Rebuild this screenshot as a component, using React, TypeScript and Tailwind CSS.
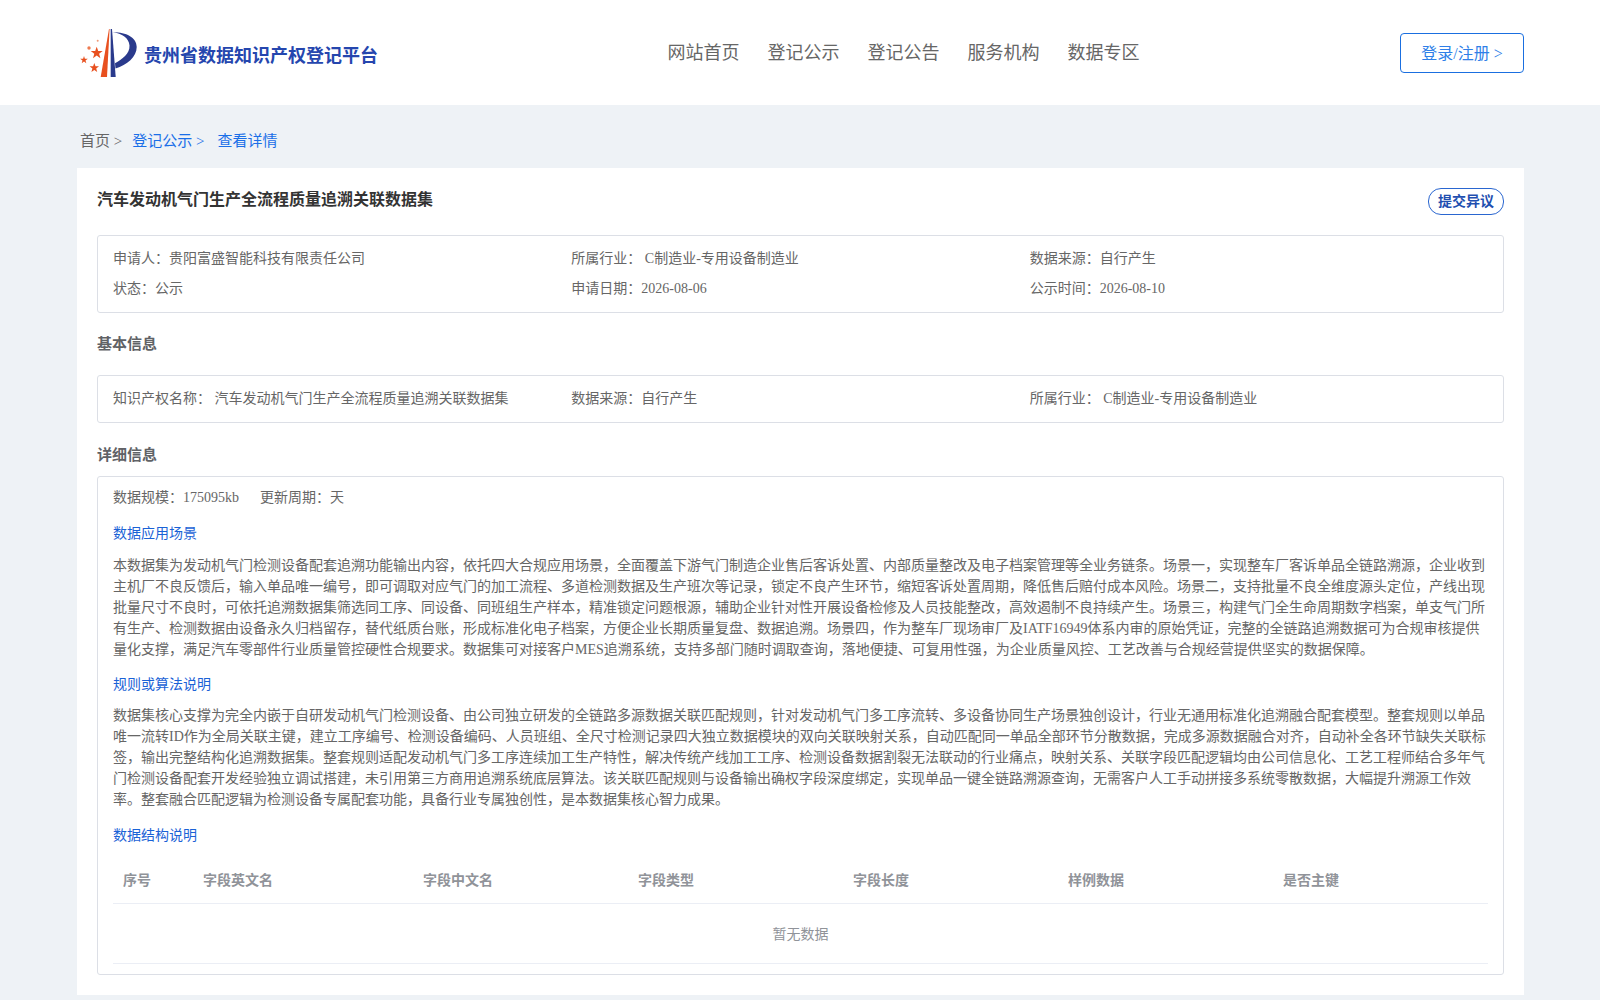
const navItems = ["网站首页", "登记公示", "登记公告", "服务机构", "数据专区"];

const columns = [
  { label: "序号", width: "w-[80px]" },
  { label: "字段英文名", width: "w-[220px]" },
  { label: "字段中文名", width: "w-[215px]" },
  { label: "字段类型", width: "w-[215px]" },
  { label: "字段长度", width: "w-[215px]" },
  { label: "样例数据", width: "w-[215px]" },
  { label: "是否主键", width: "w-[215px]" },
];

function Logo() {
  return (
    <svg viewBox="0 0 60 50" className="h-[50px] w-[60px] shrink-0">
      <path d="M29 1 L20.7 49 L27 49 L29.6 1 Z" fill="#e8501f" />
      <path d="M30.7 1 L30.7 49 L35.7 49 L32 1 Z" fill="#2a3a8c" />
      <path d="M32.7 4.3 C45 4 56.7 9 56.7 19 C56.7 29 47 37 35.5 40.5 L35 35.3 C42 31 50 26 49.5 17.5 C49 10 42 5.5 32.7 4.3 Z" fill="#2a3a8c" />
      <polygon points="16.7,18.7 18.2,23 22.7,23 19.1,25.8 20.4,30.2 16.7,27.6 13,30.2 14.3,25.8 10.7,23 15.2,23" fill="#e8501f" />
      <polygon points="14.3,35 15.5,38.3 19,38.3 16.2,40.5 17.2,44 14.3,42 11.4,44 12.4,40.5 9.6,38.3 13.1,38.3" fill="#e8501f" />
      <polygon points="4,28 4.9,30.7 7.8,30.7 5.5,32.4 6.3,35.2 4,33.6 1.7,35.2 2.5,32.4 0.2,30.7 3.1,30.7" fill="#e8501f" />
      <circle cx="9" cy="20" r="1.7" fill="#ee7a50" />
      <circle cx="17.7" cy="12.7" r="1" fill="#ee9a7a" />
    </svg>
  );
}

function InfoCell({ children }: { children: React.ReactNode }) {
  return <div className="w-1/3 leading-[30px]">{children}</div>;
}

export default function App() {
  return (
    <div className="min-h-[1000px] bg-[#eef2f6] pb-[5px] font-['Liberation_Serif','Noto_Sans_CJK_SC',serif] text-[14px] text-[#666]">
      <header className="flex h-[105px] items-center justify-between bg-white pl-[80px] pr-[76px]">
        <div className="flex items-center gap-[4px]">
          <Logo />
          <span className="mt-[8px] text-[18px] font-bold text-[#2546ae]">贵州省数据知识产权登记平台</span>
        </div>
        <nav className="ml-[29px] mt-[2px] flex gap-[28px] text-[18px] text-[#666]">
          {navItems.map((item) => (
            <a key={item}>{item}</a>
          ))}
        </nav>
        <button className="h-[40px] w-[124px] rounded-[4px] border border-[#1a6fe0] pt-[2px] text-[16px] text-[#2f7fe8]">
          登录/注册 &gt;
        </button>
      </header>

      <div className="flex h-[63px] items-center pl-[80px] pt-[10px] text-[15px]">
        <span>首页 &gt;</span>
        <span className="ml-[10px] text-[#1a6fe8]">登记公示 &gt;</span>
        <span className="ml-[13px] text-[#1a6fe8]">查看详情</span>
      </div>

      <main className="ml-[77px] w-[1447px] bg-white px-[20px] pb-[20px] pt-[20px]">
        <div className="flex items-start justify-between">
          <h1 className="text-[16px] font-bold leading-[24px] text-[#333]">汽车发动机气门生产全流程质量追溯关联数据集</h1>
          <button className="h-[27px] w-[76px] rounded-[13px] border border-[#2a66d0] text-[14px] font-bold text-[#1f4fb0]">
            提交异议
          </button>
        </div>

        <div className="mt-[20px] rounded-[3px] border border-[#dcdfe6] px-[15px] py-[8px]">
          <div className="flex">
            <InfoCell>申请人：贵阳富盛智能科技有限责任公司</InfoCell>
            <InfoCell>所属行业： C制造业-专用设备制造业</InfoCell>
            <InfoCell>数据来源：自行产生</InfoCell>
          </div>
          <div className="flex">
            <InfoCell>状态：公示</InfoCell>
            <InfoCell>申请日期：2026-08-06</InfoCell>
            <InfoCell>公示时间：2026-08-10</InfoCell>
          </div>
        </div>

        <h2 className="mt-[19px] text-[15px] font-bold leading-[24px] text-[#606266]">基本信息</h2>
        <div className="mt-[19px] rounded-[3px] border border-[#dcdfe6] px-[15px] py-[8px]">
          <div className="flex">
            <InfoCell>知识产权名称： 汽车发动机气门生产全流程质量追溯关联数据集</InfoCell>
            <InfoCell>数据来源：自行产生</InfoCell>
            <InfoCell>所属行业： C制造业-专用设备制造业</InfoCell>
          </div>
        </div>

        <h2 className="mt-[20px] text-[15px] font-bold leading-[24px] text-[#606266]">详细信息</h2>
        <div className="mt-[9px] rounded-[3px] border border-[#dcdfe6] px-[15px] pb-[10px]">
          <div className="mt-[9px] flex gap-[21px] leading-[24px]">
            <span>数据规模：175095kb</span>
            <span>更新周期：天</span>
          </div>
          <h3 className="mt-[12px] leading-[24px] text-[#1a62d6]">数据应用场景</h3>
          <p className="mt-[9px] leading-[21px]">
            本数据集为发动机气门检测设备配套追溯功能输出内容，依托四大合规应用场景，全面覆盖下游气门制造企业售后客诉处置、内部质量整改及电子档案管理等全业务链条。场景一，实现整车厂客诉单品全链路溯源，企业收到主机厂不良反馈后，输入单品唯一编号，即可调取对应气门的加工流程、多道检测数据及生产班次等记录，锁定不良产生环节，缩短客诉处置周期，降低售后赔付成本风险。场景二，支持批量不良全维度源头定位，产线出现批量尺寸不良时，可依托追溯数据集筛选同工序、同设备、同班组生产样本，精准锁定问题根源，辅助企业针对性开展设备检修及人员技能整改，高效遏制不良持续产生。场景三，构建气门全生命周期数字档案，单支气门所有生产、检测数据由设备永久归档留存，替代纸质台账，形成标准化电子档案，方便企业长期质量复盘、数据追溯。场景四，作为整车厂现场审厂及IATF16949体系内审的原始凭证，完整的全链路追溯数据可为合规审核提供量化支撑，满足汽车零部件行业质量管控硬性合规要求。数据集可对接客户MES追溯系统，支持多部门随时调取查询，落地便捷、可复用性强，为企业质量风控、工艺改善与合规经营提供坚实的数据保障。
          </p>
          <h3 className="mt-[13px] leading-[24px] text-[#1a62d6]">规则或算法说明</h3>
          <p className="mt-[8px] leading-[21px]">
            数据集核心支撑为完全内嵌于自研发动机气门检测设备、由公司独立研发的全链路多源数据关联匹配规则，针对发动机气门多工序流转、多设备协同生产场景独创设计，行业无通用标准化追溯融合配套模型。整套规则以单品唯一流转ID作为全局关联主键，建立工序编号、检测设备编码、人员班组、全尺寸检测记录四大独立数据模块的双向关联映射关系，自动匹配同一单品全部环节分散数据，完成多源数据融合对齐，自动补全各环节缺失关联标签，输出完整结构化追溯数据集。整套规则适配发动机气门多工序连续加工生产特性，解决传统产线加工工序、检测设备数据割裂无法联动的行业痛点，映射关系、关联字段匹配逻辑均由公司信息化、工艺工程师结合多年气门检测设备配套开发经验独立调试搭建，未引用第三方商用追溯系统底层算法。该关联匹配规则与设备输出确权字段深度绑定，实现单品一键全链路溯源查询，无需客户人工手动拼接多系统零散数据，大幅提升溯源工作效率。整套融合匹配逻辑为检测设备专属配套功能，具备行业专属独创性，是本数据集核心智力成果。
          </p>
          <h3 className="mt-[14px] leading-[24px] text-[#1a62d6]">数据结构说明</h3>
          <div className="mt-[7px] flex h-[49px] items-center border-b border-[#ebeef5] pt-[2px] font-bold text-[#909399]">
            {columns.map((col) => (
              <div key={col.label} className={`${col.width} px-[10px]`}>
                {col.label}
              </div>
            ))}
          </div>
          <div className="flex h-[60px] items-center justify-center border-b border-[#ebeef5] pt-[2px] text-[#909399]">暂无数据</div>
        </div>
      </main>
    </div>
  );
}
